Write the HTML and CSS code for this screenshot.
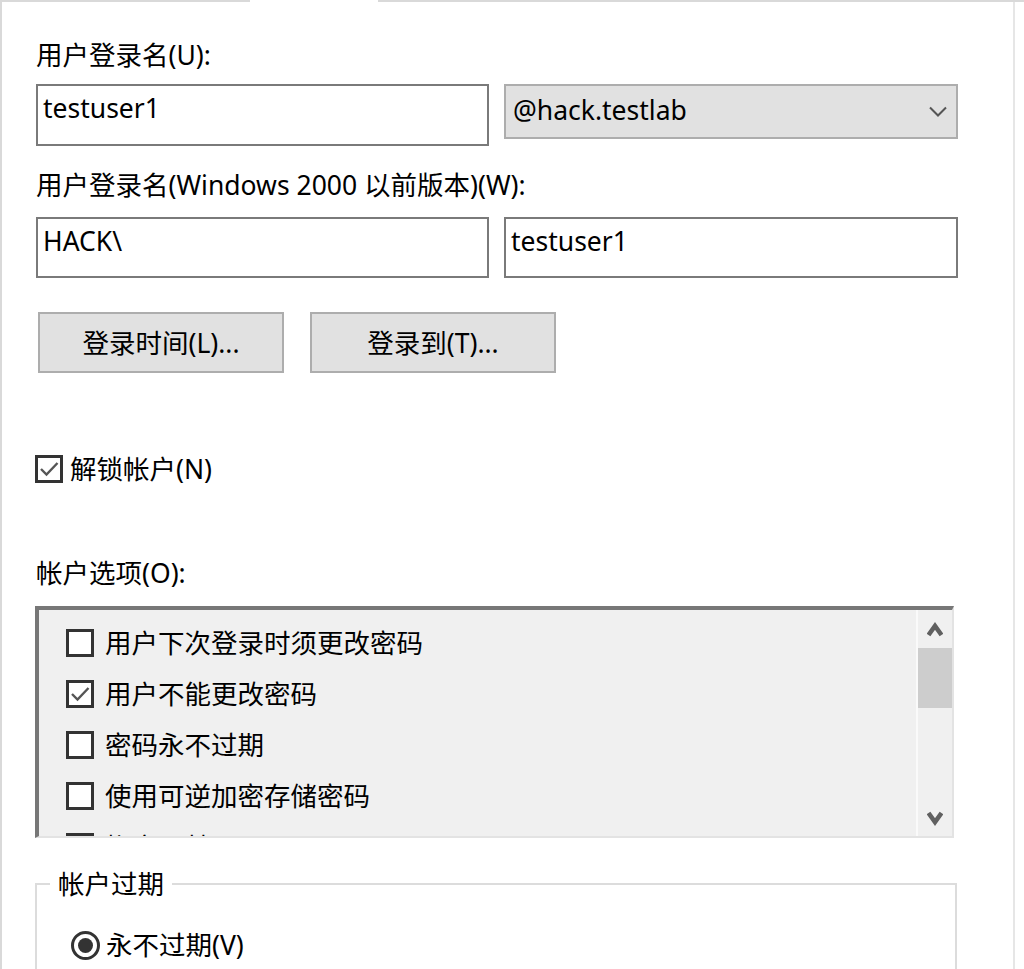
FILE: index.html
```html
<!DOCTYPE html>
<html lang="zh-CN">
<head>
<meta charset="utf-8">
<title>帐户</title>
<link rel="stylesheet" href="styles.css">
</head>
<body>
<div class="tabline"><span class="seg seg-left"></span><span class="tab-gap"></span><span class="seg seg-right"></span></div>
<div class="panel">
  <div class="label label-first">用户登录名(U):</div>
  <div class="row row-upn">
    <div class="textbox">testuser1</div>
    <div class="combo">
      <span>@hack.testlab</span>
      <svg class="combo-arrow" width="18" height="11" viewBox="0 0 18 11"><polyline points="1,1.5 9,9.5 17,1.5" fill="none" stroke="#555" stroke-width="2"/></svg>
    </div>
  </div>
  <div class="label label-second">用户登录名(Windows 2000 以前版本)(W):</div>
  <div class="row row-sam">
    <div class="textbox short">HACK\</div>
    <div class="textbox short wide">testuser1</div>
  </div>
  <div class="buttons">
    <div class="btn">登录时间(L)...</div>
    <div class="btn">登录到(T)...</div>
  </div>
  <div class="check-row">
    <span class="checkbox"><svg width="22" height="22" viewBox="0 0 22 22"><polyline points="3,11 8.5,16.5 19.5,5" fill="none" stroke="#555" stroke-width="2.4"/></svg></span>
    <span class="check-text">解锁帐户(N)</span>
  </div>
  <div class="label label-options">帐户选项(O):</div>
  <div class="listbox">
    <div class="items">
      <div class="item"><span class="checkbox"></span><span class="item-text">用户下次登录时须更改密码</span></div>
      <div class="item"><span class="checkbox"><svg width="22" height="22" viewBox="0 0 22 22"><polyline points="3,11 8.5,16.5 19.5,5" fill="none" stroke="#555" stroke-width="2.4"/></svg></span><span class="item-text">用户不能更改密码</span></div>
      <div class="item"><span class="checkbox"></span><span class="item-text">密码永不过期</span></div>
      <div class="item"><span class="checkbox"></span><span class="item-text">使用可逆加密存储密码</span></div>
      <div class="item"><span class="checkbox"></span><span class="item-text">帐户已禁用</span></div>
    </div>
    <div class="scrollbar">
      <div class="sb-btn sb-up"><svg width="16" height="15" viewBox="0 0 16 15"><polyline points="1.5,13 8,4 14.5,13" fill="none" stroke="#606060" stroke-width="4.6"/></svg></div>
      <div class="sb-thumb"></div>
      <div class="sb-track"></div>
      <div class="sb-btn sb-down"><svg width="16" height="15" viewBox="0 0 16 15"><polyline points="1.5,2 8,11 14.5,2" fill="none" stroke="#606060" stroke-width="4.6"/></svg></div>
    </div>
  </div>
  <fieldset class="group">
    <legend>帐户过期</legend>
    <div class="radio-row">
      <span class="radio"><span class="radio-dot"></span></span>
      <span class="radio-text">永不过期(V)</span>
    </div>
  </fieldset>
</div>
</body>
</html>
```
FILE: styles.css
```css
* { box-sizing: border-box; }
html, body { margin: 0; padding: 0; background: #ffffff; }
body {
  width: 1024px;
  height: 969px;
  overflow: hidden;
  font-family: "Noto Sans", "Noto Sans CJK SC", sans-serif;
  font-size: 26.5px;
  line-height: 34px;
  color: #000;
}

.tabline { display: flex; height: 2px; }
.seg { background: #d9d9d9; }
.seg-left { width: 250px; }
.tab-gap { width: 128px; }
.seg-right { flex: 1; }

.panel {
  width: 1015px;
  height: 967px;
  border-left: 2px solid #d9d9d9;
  border-right: 2px solid #e6e6e6;
  padding: 36px 0 0 34px;
}

.label { height: 34px; white-space: nowrap; }
.label-first { margin-bottom: 12px; }
.label-second { margin-top: 22px; margin-bottom: 15px; }

.row { display: flex; gap: 15px; align-items: flex-start; }

.textbox {
  width: 453px;
  height: 62px;
  border: 2px solid #7a7a7a;
  padding: 5px 0 0 5px;
  background: #fff;
}
.textbox.short { height: 61px; }
.textbox.wide { width: 454px; }

.combo {
  width: 454px;
  height: 55px;
  background: #e1e1e1;
  border: 2px solid #adadad;
  padding: 7px 9px 0 7px;
  display: flex;
  justify-content: space-between;
}
.combo-arrow { align-self: center; margin-top: -7px; }

.buttons { display: flex; gap: 26px; margin-top: 34px; padding-left: 2px; }
.btn {
  width: 246px;
  height: 61px;
  background: #e1e1e1;
  border: 2px solid #adadad;
  display: flex;
  align-items: center;
  justify-content: center;
}

.check-row {
  display: flex;
  align-items: center;
  height: 34px;
  margin-top: 79px;
  margin-left: -1px;
}
.checkbox {
  width: 28px;
  height: 28px;
  border: 3px solid #333;
  background: #fff;
  display: inline-flex;
  flex: none;
}
.check-text { margin-left: 7px; }

.label-options { margin-top: 70px; }

.listbox {
  margin-top: 16px;
  margin-left: -1px;
  width: 919px;
  height: 232px;
  border-top: 4px solid #777;
  border-left: 4px solid #777;
  border-right: 2px solid #e3e3e3;
  border-bottom: 2px solid #e3e3e3;
  background: #f0f0f0;
  display: flex;
}
.items { flex: 1; overflow: hidden; padding: 7px 0 0 27px; }
.item { height: 51px; display: flex; align-items: center; }
.item-text { margin-left: 11px; white-space: nowrap; }

.scrollbar {
  width: 36px;
  border-left: 2px solid #fafafa;
  display: flex;
  flex-direction: column;
}
.sb-btn { display: flex; justify-content: center; align-items: center; }
.sb-up { height: 38px; }
.sb-thumb { height: 60px; background: #cdcdcd; }
.sb-track { flex: 1; }
.sb-down { height: 35px; }

.group {
  margin: 29px 0 0 -1px;
  padding: 0;
  width: 922px;
  height: 200px;
  border: 2px solid #dcdcdc;
  min-inline-size: 0;
}
.group legend {
  padding: 0 8px;
  margin-left: 13px;
  line-height: 34px;
}
.radio-row {
  display: flex;
  align-items: center;
  height: 34px;
  margin-top: 27px;
  padding-left: 34px;
}
.radio {
  width: 29px;
  height: 29px;
  border: 3px solid #333;
  border-radius: 50%;
  background: #fff;
  display: flex;
  align-items: center;
  justify-content: center;
  flex: none;
}
.radio-dot { width: 15px; height: 15px; border-radius: 50%; background: #333; }
.radio-text { margin-left: 6px; }
```
